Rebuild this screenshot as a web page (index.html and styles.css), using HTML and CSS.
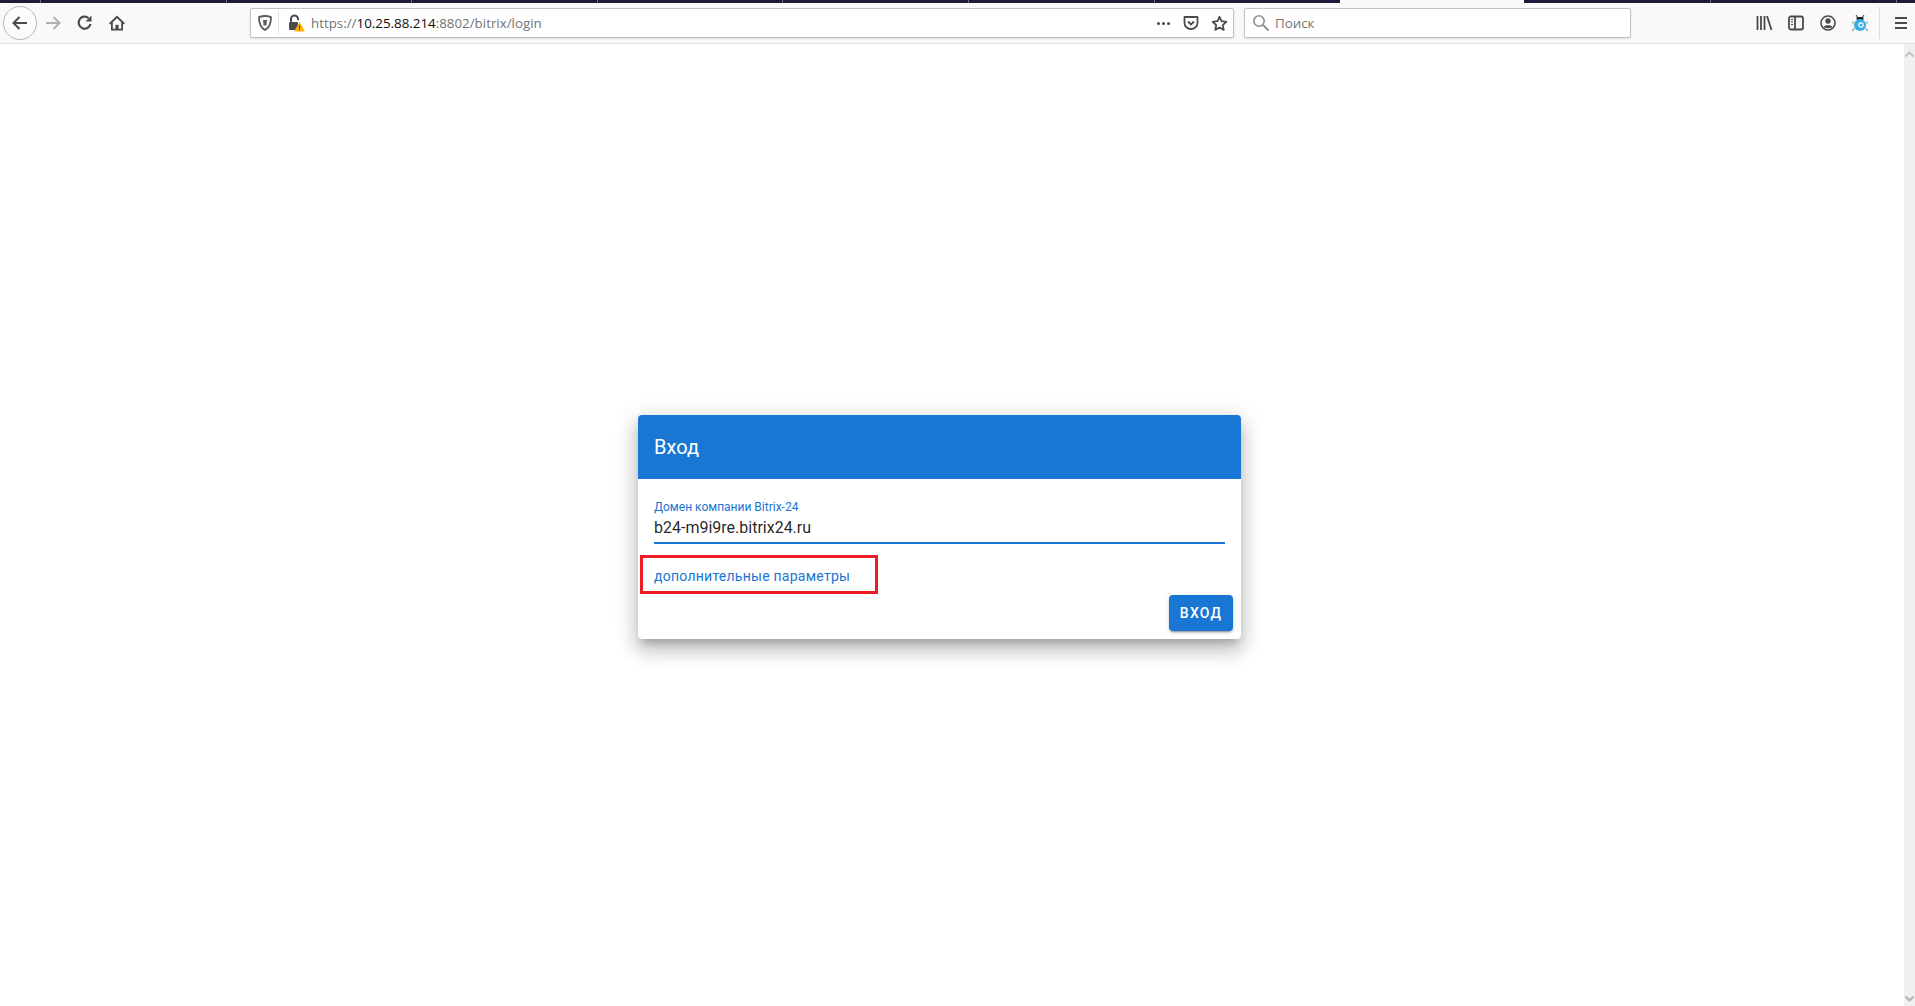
FILE: index.html
```html
<!DOCTYPE html>
<html lang="ru">
<head>
<meta charset="utf-8">
<title>Вход</title>
<link rel="stylesheet" href="styles.css">
</head>
<body>
<div class="browser">
  <div class="tabstrip">
    <div class="tab tab-first"></div><div class="tab"></div><div class="tab"></div><div class="tab"></div><div class="tab"></div><div class="tab"></div><div class="tab"></div><div class="tab tab-prev"></div><div class="tab tab-active"></div><div class="tab tab-next"></div><div class="tab"></div>
  </div>
  <div class="toolbar">
    <div class="nav">
      <button class="back" aria-label="Назад"><svg width="18" height="18" viewBox="0 0 18 18"><path d="M16 9H2.500M8.500 3 2.500 9l6 6" fill="none" stroke="#4a4a4f" stroke-width="2"/></svg></button>
      <span class="slot"><svg width="18" height="18" viewBox="0 0 18 18"><path d="M2 9h13.500M9.500 3l6 6-6 6" fill="none" stroke="#b1b1b3" stroke-width="2"/></svg></span>
      <span class="slot"><svg width="18" height="18" viewBox="0 0 18 18"><path d="M14.500 10a6 6 0 1 1-2-6" fill="none" stroke="#4a4a4f" stroke-width="2.200"/><path d="M15.500 1.500v6h-6z" fill="#4a4a4f"/></svg></span>
      <span class="slot"><svg width="18" height="18" viewBox="0 0 18 18"><path d="M9 1.500 1 9.200l1.200 1.200L3 9.700V16.500h12V9.700l.8.7L17 9.200z" fill="#4a4a4f"/><path d="M9 4.300 4.800 8.300v6.500h2.700v-3.800h3v3.800h2.700V8.300z" fill="#f9f9fa"/><rect x="7.800" y="10.800" width="2.400" height="4" fill="#4a4a4f"/></svg></span>
    </div>
    <div class="urlbar">
      <span class="url-icon"><svg width="16" height="16" viewBox="0 0 16 16"><path d="M8 1c2 0 4 .4 6 1.200C14 8 12.500 12.500 8 15 3.500 12.500 2 8 2 2.200 4 1.400 6 1 8 1z" fill="none" stroke="#5b5b60" stroke-width="1.800"/><path d="M6 5h4l-.6 5.500H6.600z" fill="#5b5b60"/></svg></span>
      <span class="url-sep"></span>
      <span class="lock"><svg width="18" height="18" viewBox="0 0 18 18"><path d="M4 8V5a3.500 3.500 0 0 1 7 0v1" fill="none" stroke="#4a4a4f" stroke-width="2"/><rect x="2" y="8" width="9" height="8" rx="1.200" fill="#4a4a4f"/><path d="M12.500 8 18 17.500H7z" fill="#ffb300"/><rect x="12" y="11.500" width="1" height="3" fill="#3a2a00"/><rect x="12" y="15.200" width="1" height="1" fill="#3a2a00"/></svg></span>
      <span class="url-text"><span class="dim">https://</span>10.25.88.214<span class="dim">:8802/bitrix/login</span></span>
      <span class="dots"><i></i><i></i><i></i></span>
      <span class="url-end"><svg width="16" height="16" viewBox="0 0 16 16"><path d="M1.500 2h13v6a6.500 6 0 0 1-13 0z" fill="none" stroke="#4a4a4f" stroke-width="1.800" stroke-linejoin="round"/><path d="M5 6.500l3 3 3-3" fill="none" stroke="#4a4a4f" stroke-width="1.800"/></svg></span>
      <span class="url-end"><svg width="17" height="17" viewBox="0 0 17 17"><path d="M8.500 1.800l2 4.400 4.800.6-3.500 3.300.9 4.800-4.200-2.400-4.200 2.400.9-4.800L1.700 6.800l4.800-.6z" fill="none" stroke="#4a4a4f" stroke-width="1.800" stroke-linejoin="round"/></svg></span>
    </div>
    <div class="searchbar">
      <svg width="18" height="18" viewBox="0 0 18 18"><circle cx="7" cy="7" r="5.200" fill="none" stroke="#8f8f91" stroke-width="1.600"/><path d="M11 11l5.500 5.500" stroke="#8f8f91" stroke-width="2"/></svg>
      <span class="search-text">Поиск</span>
    </div>
    <div class="tools">
      <span class="slot"><svg width="18" height="18" viewBox="0 0 18 18"><path d="M2.500 2v14M6 2v14M9.500 2v14M12 2l4.500 14" fill="none" stroke="#4a4a4f" stroke-width="1.800"/></svg></span>
      <span class="slot"><svg width="18" height="18" viewBox="0 0 18 18"><rect x="2" y="2.500" width="14" height="13" rx="2" fill="none" stroke="#4a4a4f" stroke-width="1.800"/><path d="M8 2.500v13" stroke="#4a4a4f" stroke-width="1.800"/><path d="M4 5.500h2M4 8h2M4 10.500h2" stroke="#4a4a4f" stroke-width="1.200"/></svg></span>
      <span class="slot"><svg width="18" height="18" viewBox="0 0 18 18"><circle cx="9" cy="9" r="7" fill="none" stroke="#4a4a4f" stroke-width="1.600"/><circle cx="9" cy="7" r="2.700" fill="#4a4a4f"/><path d="M4.500 13c1-2.500 8-2.500 9 0-1 1.500-8 1.500-9 0z" fill="#4a4a4f"/></svg></span>
      <span class="slot"><svg width="18" height="18" viewBox="0 0 18 18"><path d="M5 1l2 3h4l2-3" fill="none" stroke="#333" stroke-width="1"/><rect x="5.500" y="3" width="7" height="3" rx="1" fill="#222"/><ellipse cx="9" cy="11" rx="6" ry="6" fill="#38aee8"/><circle cx="10" cy="11" r="2.200" fill="none" stroke="#fff" stroke-width="1.200"/><path d="M1 8l2.500 1.500M1 17l3-3M17 8l-2.500 1.500M17 17l-3-3" stroke="#8aa" stroke-width="1.200"/></svg></span>
      <span class="tool-sep"></span>
      <span class="menu-btn"><i></i><i></i><i></i></span>
    </div>
  </div>
  <div class="content">
    <main class="page">
      <section class="card">
        <header class="card-head">Вход</header>
        <div class="card-body">
          <div class="field">
            <label class="field-label">Домен компании Bitrix-24</label>
            <div class="field-value">b24-m9i9re.bitrix24.ru</div>
          </div>
          <a class="more-link">дополнительные параметры</a>
          <span class="highlight"></span>
        </div>
        <div class="card-actions"><button class="login">Вход</button></div>
      </section>
    </main>
    <div class="scrollbar">
      <svg width="11" height="8" viewBox="0 0 11 8"><path d="M1.500 6.500l4-4 4 4" fill="none" stroke="#c4c4c4" stroke-width="2"/></svg>
      <svg width="11" height="8" viewBox="0 0 11 8"><path d="M1.500 1.500l4 4 4-4" fill="none" stroke="#b4b4b4" stroke-width="2"/></svg>
    </div>
  </div>
</div>
</body>
</html>
```

FILE: styles.css
```css
* { box-sizing: border-box; }
html, body { margin: 0; height: 100%; overflow: hidden; background: #fff; }
.browser { display: flex; flex-direction: column; height: 1006px; width: 1915px; }

.tabstrip { display: flex; height: 3px; background: #1b1b3a; flex: none; }
.tab { width: 185.6px; border-right: 1px solid #70707f; flex: none; }
.tab-first { width: 41px; }
.tab-prev { border-right: 0; }
.tab-active { width: 184px; background: #f9f9fa; border-right: 0; }
.tab-next { width: 187px; }

.toolbar { display: flex; align-items: center; height: 41px; flex: none; background: #f9f9fa; border-bottom: 1px solid #e0e0e1; padding-left: 3px; padding-top: 4px; padding-bottom: 4px; }
.nav { display: flex; align-items: center; width: 247px; flex: none; }
.slot { display: flex; align-items: center; justify-content: center; width: 32px; height: 32px; flex: none; }
.back { display: flex; align-items: center; justify-content: center; width: 34px; height: 34px; padding: 0; background: #fbfbfb; border: 1px solid #b8b8b8; border-radius: 50%; flex: none; }

.urlbar, .searchbar { display: flex; align-items: center; height: 30px; background: #fff; border: 1px solid #c3c3c4; border-radius: 2px; box-shadow: 0 1px 2px rgba(0,0,0,.12); flex: none; }
.urlbar { width: 984px; }
.url-icon { display: flex; justify-content: center; width: 27px; flex: none; }
.url-sep { width: 1px; height: 24px; background: #e2e2e3; flex: none; }
.lock { display: flex; justify-content: center; width: 31px; margin-left: 1px; flex: none; }
.url-text { font: 13.35px "Open Sans", "Noto Sans", sans-serif; color: #0c0c0d; flex: 1; white-space: nowrap; }
.dim { color: #737373; }
.dots { display: flex; gap: 2px; margin-right: 7px; }
.dots i { display: block; width: 3px; height: 3px; border-radius: 50%; background: #4a4a4f; }
.url-end { display: flex; justify-content: center; width: 28px; flex: none; }

.searchbar { width: 387px; margin-left: 10px; padding-left: 7px; gap: 5px; }
.search-text { font: 13.35px "Open Sans", "Noto Sans", sans-serif; color: #737373; }

.tools { display: flex; align-items: center; margin-left: 117px; flex: none; }
.tool-sep { width: 1px; height: 32px; background: #dcdcdd; margin-left: 3px; flex: none; }
.menu-btn { display: flex; flex-direction: column; gap: 3px; margin-left: 15px; width: 12px; flex: none; }
.menu-btn i { display: block; height: 2px; background: #4a4a4f; }

.content { display: flex; flex: 1; min-height: 0; }
.page { flex: 1; display: flex; justify-content: center; align-items: flex-start; padding: 371px 25px 0 0; background: #fff; }
.scrollbar { width: 11px; display: flex; flex-direction: column; justify-content: space-between; padding: 6px 0 3px; background: #f0f0f0; flex: none; }

.card { position: relative; width: 603px; height: 224px; background: #fff; border-radius: 4px; display: flex; flex-direction: column; box-shadow: 0 7px 8px -4px rgba(0,0,0,.2), 0 12px 17px 2px rgba(0,0,0,.14), 0 5px 22px 4px rgba(0,0,0,.12); font-family: Roboto, "Noto Sans", sans-serif; }
.card-head { display: flex; align-items: center; height: 64px; padding: 0 16px; background: #1976d2; color: #fff; font-size: 20px; font-weight: 400; border-radius: 4px 4px 0 0; flex: none; }
.card-body { position: relative; padding: 21px 16px 0; flex: 1; }
.field { border-bottom: 2px solid #1976d2; height: 44px; }
.field-label { display: block; font-size: 12px; line-height: 14px; color: #1976d2; }
.field-value { font-size: 16px; line-height: 24px; margin-top: 2px; color: rgba(0,0,0,.87); }
.more-link { display: block; margin-top: 22px; font-size: 14px; line-height: 20px; color: #1976d2; letter-spacing: .25px; }
.highlight { position: absolute; left: 2px; top: 76px; width: 238px; height: 39px; border: 3px solid #ed1c24; }
.card-actions { position: absolute; right: 8px; bottom: 8px; }
.login { display: block; width: 64px; height: 36px; padding: 0; border: 0; border-radius: 4px; background: #1976d2; color: #fff; font: 500 14px Roboto, sans-serif; letter-spacing: 1.25px; text-transform: uppercase; box-shadow: 0 3px 1px -2px rgba(0,0,0,.2), 0 2px 2px 0 rgba(0,0,0,.14), 0 1px 5px 0 rgba(0,0,0,.12); }
```
